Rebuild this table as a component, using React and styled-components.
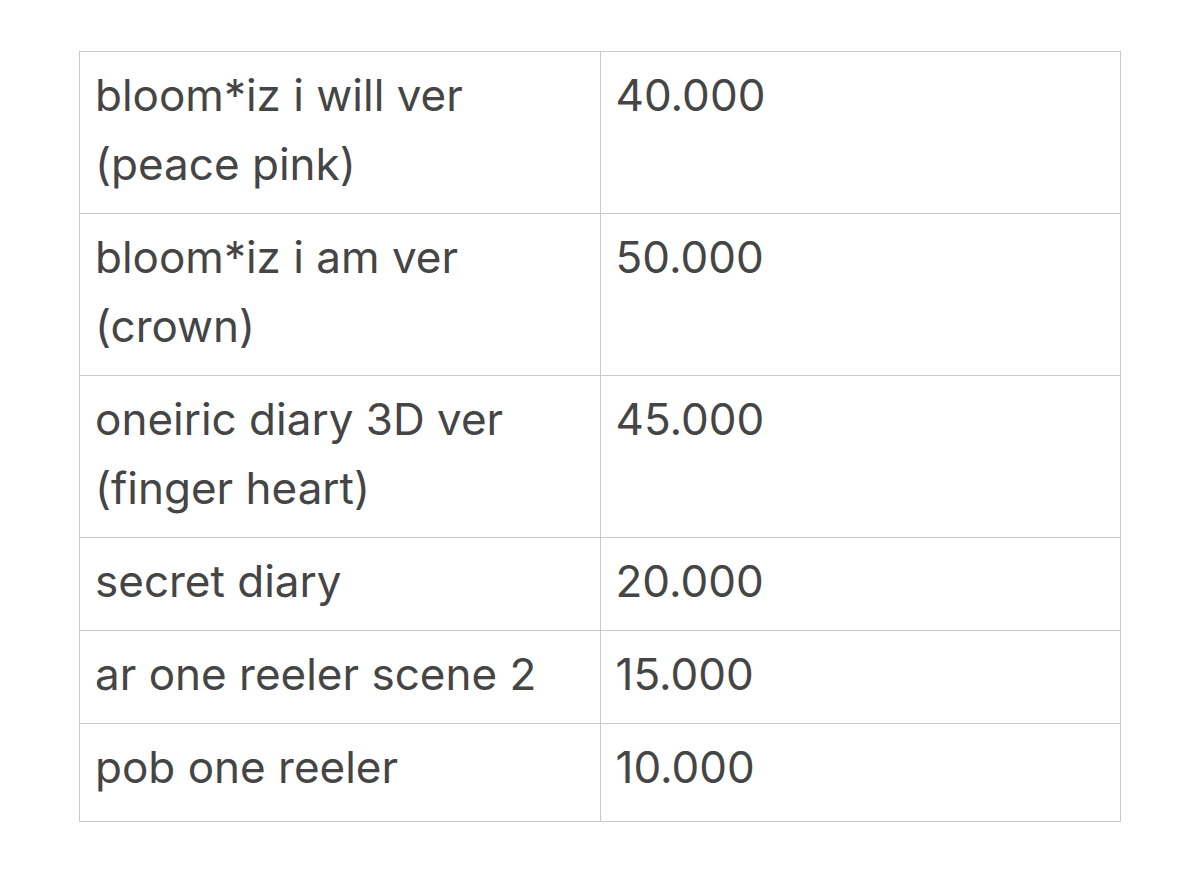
import React from "react";
import styled, { createGlobalStyle } from "styled-components";

const Global = createGlobalStyle`
  html, body { margin: 0; padding: 0; background: #ffffff; }
  body { font-family: Inter, "Noto Sans", sans-serif; }
`;

const Page = styled.div`
  padding: 51px 79px 0 79px;
`;

const Table = styled.table`
  width: 1042px;
  border-collapse: collapse;
  table-layout: fixed;
`;

const Cell = styled.td`
  width: 50%;
  border: 1px solid #c9c9c9;
  padding: 9px 15px ${(p) => (p.$last ? 19 : 14)}px 15px;
  vertical-align: top;
  font-size: 44px;
  line-height: 69px;
  color: #454545;
  font-weight: 400;
`;

const rows = [
  ["bloom*iz i will ver", "(peace pink)", "40.000"],
  ["bloom*iz i am ver", "(crown)", "50.000"],
  ["oneiric diary 3D ver", "(finger heart)", "45.000"],
  ["secret diary", null, "20.000"],
  ["ar one reeler scene 2", null, "15.000"],
  ["pob one reeler", null, "10.000"],
];

export default function App() {
  return (
    <>
      <Global />
      <Page>
        <Table>
          <tbody>
            {rows.map(([a, b, price], i) => (
              <tr key={i}>
                <Cell $last={i === rows.length - 1}>
                  {a}
                  {b && <br />}
                  {b}
                </Cell>
                <Cell $last={i === rows.length - 1}>{price}</Cell>
              </tr>
            ))}
          </tbody>
        </Table>
      </Page>
    </>
  );
}
